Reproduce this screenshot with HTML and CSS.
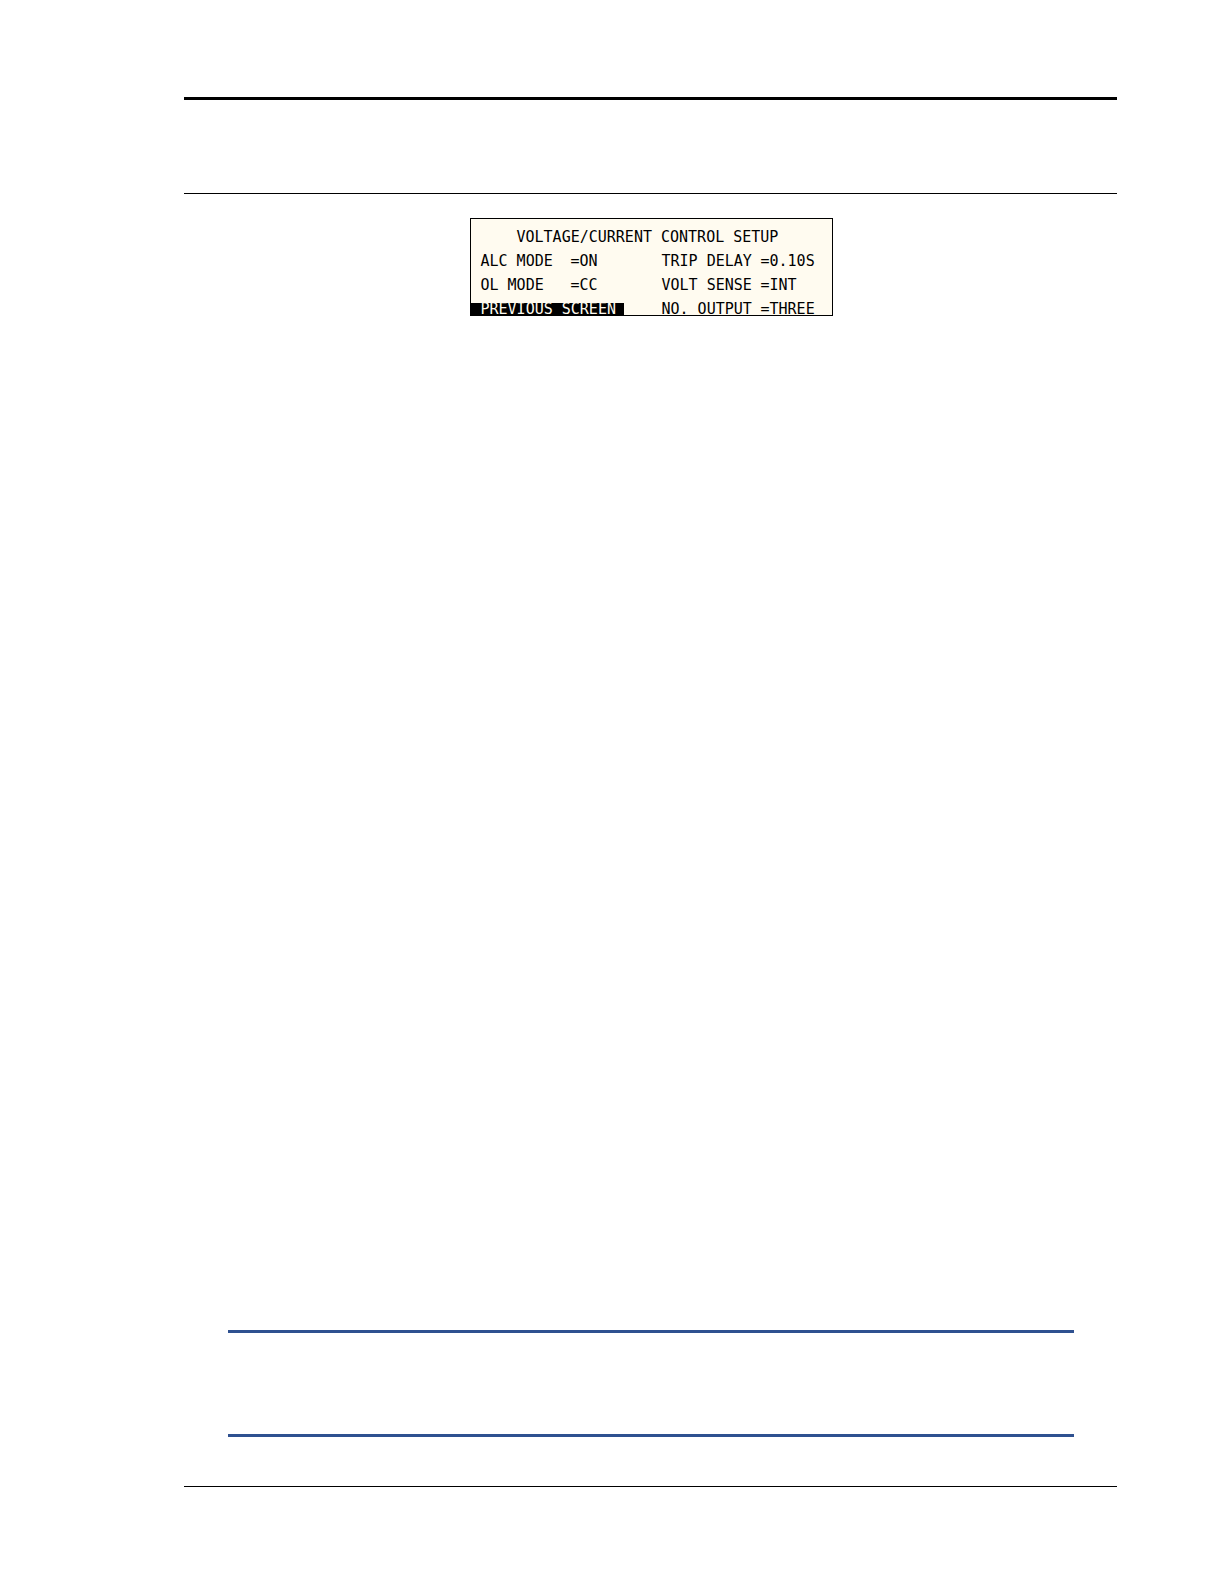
FILE: index.html
```html
<!DOCTYPE html>
<html lang="en">
<head>
<meta charset="utf-8">
<meta name="viewport" content="width=device-width, initial-scale=1">
<title>Voltage/Current Control Setup</title>
<link rel="stylesheet" href="styles.css">
</head>
<body>
<div class="page">
  <header class="page-header"></header>
  <main class="content">
    <section class="lcd">
      <h1 class="lcd-title">VOLTAGE/CURRENT CONTROL SETUP</h1>
      <div class="field"><span class="name">ALC MODE</span><span>=ON</span></div>
      <div class="field wide"><span class="name">TRIP DELAY</span><span>=0.10S</span></div>
      <div class="field"><span class="name">OL MODE</span><span>=CC</span></div>
      <div class="field wide"><span class="name">VOLT SENSE</span><span>=INT</span></div>
      <button class="previous" type="button">PREVIOUS SCREEN</button>
      <div class="field wide"><span class="name">NO. OUTPUT</span><span>=THREE</span></div>
    </section>
    <aside class="note"></aside>
  </main>
  <footer class="page-footer"></footer>
</div>
</body>
</html>
```
FILE: styles.css
```css
* {
  box-sizing: border-box;
}

body {
  margin: 0;
  background: #fff;
  color: #000;
}

.page {
  display: flex;
  flex-direction: column;
  min-height: 100vh;
  padding: 97px 107px 97px 184px;
}

.page-header {
  height: 97px;
  border-top: 3px solid #000;
  border-bottom: 1px solid #000;
}

.content {
  display: flex;
  flex: 1;
  flex-direction: column;
  justify-content: space-between;
  padding: 24px 43px 49px 44px;
}

.lcd {
  display: grid;
  grid-template-columns: 181px 180px;
  grid-auto-rows: 24px;
  align-items: end;
  align-self: center;
  border: 1px solid #000;
  background: #fffbf0;
  font: 15px/12px "DejaVu Sans Mono", monospace;
  white-space: nowrap;
}

.lcd-title {
  grid-column: 1 / -1;
  margin: 0;
  padding-left: 46px;
  font: inherit;
}

.field {
  display: flex;
  padding-left: 10px;
}

.name {
  width: 90px;
}

.wide .name {
  width: 99px;
}

.previous {
  justify-self: start;
  height: 12px;
  margin: 0;
  padding: 0 8px 0 10px;
  border: 0;
  background: #000;
  color: #fffbf0;
  font: inherit;
}

.note {
  height: 107px;
  border-top: 3px solid #2f5190;
  border-bottom: 3px solid #2f5190;
}

.page-footer {
  border-top: 1px solid #000;
}
```
